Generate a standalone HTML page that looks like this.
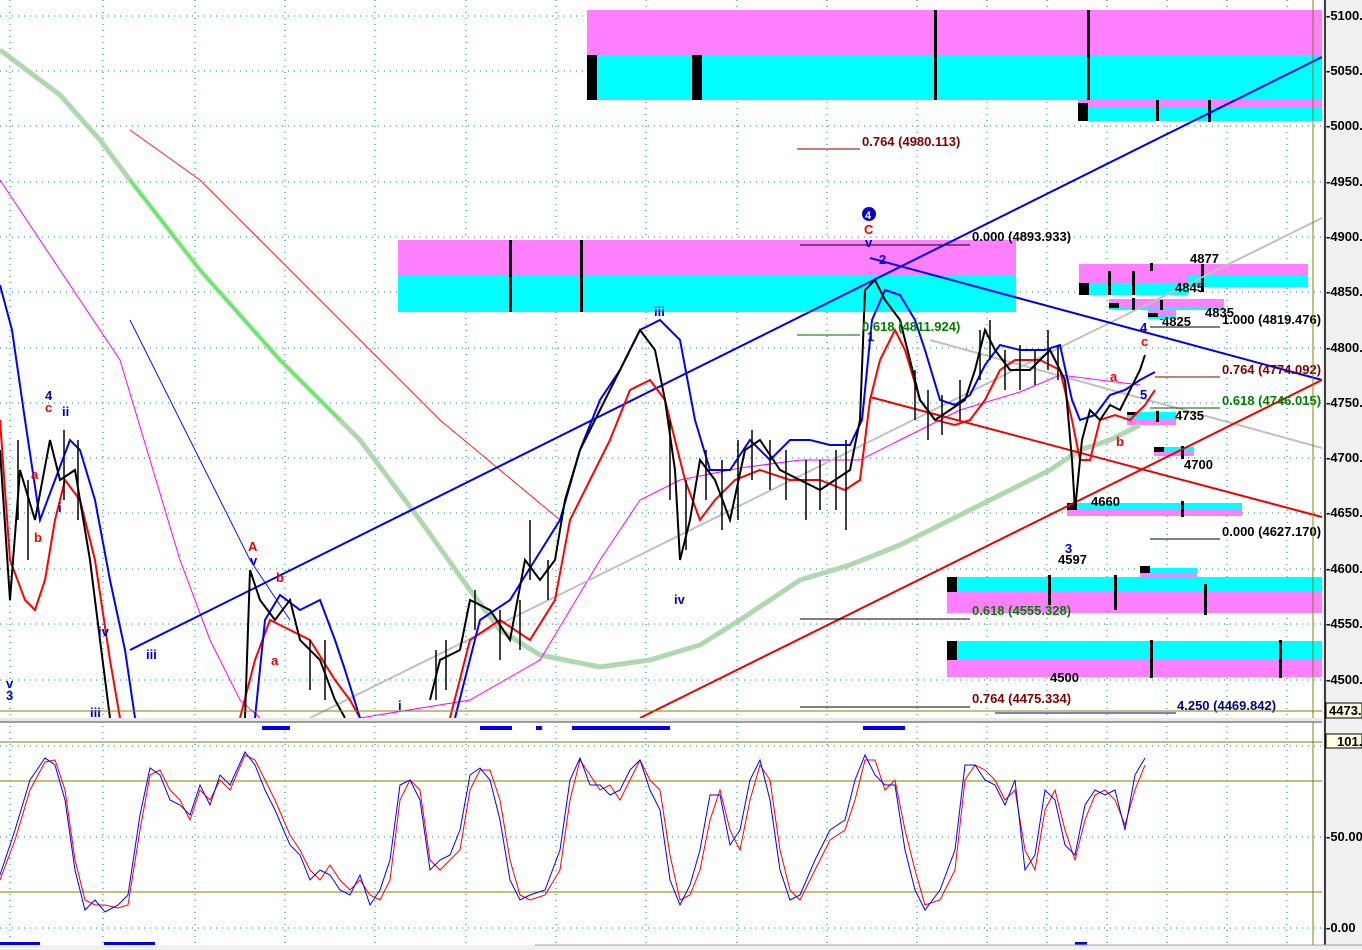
<!DOCTYPE html>
<html><head><meta charset="utf-8"><style>
body{margin:0;background:#fff;}
svg{display:block;font-family:"Liberation Sans",sans-serif;font-weight:bold;font-size:13px}
</style></head><body>
<svg width="1362" height="950" viewBox="0 0 1362 950" xmlns="http://www.w3.org/2000/svg">
<rect width="1362" height="950" fill="#fff"/>
<!-- grid -->
<g stroke="#008080" stroke-width="1" stroke-dasharray="1,5">
<line x1="0" y1="16" x2="1322" y2="16"/><line x1="0" y1="71" x2="1322" y2="71"/><line x1="0" y1="126" x2="1322" y2="126"/><line x1="0" y1="182" x2="1322" y2="182"/><line x1="0" y1="237" x2="1322" y2="237"/><line x1="0" y1="292" x2="1322" y2="292"/><line x1="0" y1="348" x2="1322" y2="348"/><line x1="0" y1="403" x2="1322" y2="403"/><line x1="0" y1="458" x2="1322" y2="458"/><line x1="0" y1="513" x2="1322" y2="513"/><line x1="0" y1="569" x2="1322" y2="569"/><line x1="0" y1="624" x2="1322" y2="624"/><line x1="0" y1="680" x2="1322" y2="680"/>
<line x1="0" y1="746" x2="1322" y2="746"/><line x1="0" y1="837" x2="1322" y2="837"/><line x1="0" y1="928" x2="1322" y2="928"/>
<line x1="10" y1="0" x2="10" y2="945"/><line x1="103" y1="0" x2="103" y2="945"/><line x1="195" y1="0" x2="195" y2="945"/><line x1="285" y1="0" x2="285" y2="945"/><line x1="375" y1="0" x2="375" y2="945"/><line x1="466" y1="0" x2="466" y2="945"/><line x1="556" y1="0" x2="556" y2="945"/><line x1="646" y1="0" x2="646" y2="945"/><line x1="737" y1="0" x2="737" y2="945"/><line x1="827" y1="0" x2="827" y2="945"/><line x1="917" y1="0" x2="917" y2="945"/><line x1="987" y1="0" x2="987" y2="945"/><line x1="1047" y1="0" x2="1047" y2="945"/><line x1="1107" y1="0" x2="1107" y2="945"/><line x1="1167" y1="0" x2="1167" y2="945"/><line x1="1227" y1="0" x2="1227" y2="945"/><line x1="1287" y1="0" x2="1287" y2="945"/>
</g>
<!-- boxes -->
<rect x="587" y="10" width="735" height="45" fill="#ff80ff"/><rect x="587" y="55" width="735" height="45" fill="#00ffff"/>
<rect x="587" y="55" width="10" height="45" fill="#000"/><rect x="692" y="55" width="10" height="45" fill="#000"/>
<rect x="934" y="10" width="3" height="90" fill="#000"/><rect x="1087" y="10" width="3" height="90" fill="#000"/>
<rect x="1078" y="100" width="244" height="8" fill="#ff80ff"/><rect x="1078" y="108" width="244" height="13" fill="#00ffff"/><rect x="1078" y="103" width="10" height="18" fill="#000"/>
<rect x="1156" y="100" width="3" height="21" fill="#000"/><rect x="1208" y="100" width="3" height="22" fill="#000"/>
<rect x="398" y="240" width="618" height="36" fill="#ff80ff"/><rect x="398" y="276" width="618" height="36" fill="#00ffff"/>
<rect x="509" y="240" width="3" height="72" fill="#000"/><rect x="580" y="240" width="3" height="72" fill="#000"/>
<rect x="1079" y="264" width="229" height="20" fill="#ff80ff"/><rect x="1188" y="276" width="120" height="11" fill="#00ffff"/><rect x="1079" y="283" width="109" height="12" fill="#00ffff"/><rect x="1079" y="283" width="10" height="12" fill="#000"/>
<rect x="1108" y="271" width="3" height="24" fill="#000"/><rect x="1132" y="271" width="3" height="24" fill="#000"/><rect x="1150" y="263" width="3" height="8" fill="#000"/><rect x="1201" y="264" width="3" height="28" fill="#000"/>
<rect x="1109" y="299" width="115" height="8" fill="#ff80ff"/><rect x="1109" y="307" width="115" height="3" fill="#00ffff"/><rect x="1109" y="303" width="10" height="5" fill="#000"/><rect x="1132" y="298" width="3" height="12" fill="#000"/><rect x="1160" y="300" width="3" height="20" fill="#000"/>
<rect x="1148" y="310" width="28" height="5" fill="#ff80ff"/><rect x="1148" y="315" width="28" height="4" fill="#00ffff"/><rect x="1148" y="313" width="10" height="4" fill="#000"/>
<rect x="1127" y="412" width="49" height="7" fill="#00ffff"/><rect x="1127" y="419" width="49" height="6" fill="#ff80ff"/><rect x="1127" y="412" width="10" height="3" fill="#000"/><rect x="1156" y="411" width="3" height="11" fill="#000"/>
<rect x="1154" y="447" width="40" height="5" fill="#00ffff"/><rect x="1154" y="452" width="40" height="4" fill="#ff80ff"/><rect x="1154" y="447" width="10" height="5" fill="#000"/><rect x="1181" y="446" width="3" height="13" fill="#000"/>
<rect x="1067" y="503" width="175" height="7" fill="#00ffff"/><rect x="1067" y="510" width="175" height="6" fill="#ff80ff"/><rect x="1067" y="503" width="10" height="7" fill="#000"/><rect x="1181" y="501" width="3" height="16" fill="#000"/>
<rect x="1140" y="568" width="57" height="5" fill="#00ffff"/><rect x="1140" y="566" width="10" height="7" fill="#000"/>
<rect x="947" y="577" width="375" height="15" fill="#00ffff"/><rect x="947" y="592" width="375" height="21" fill="#ff80ff"/><rect x="1140" y="573" width="57" height="4" fill="#ff80ff"/><rect x="947" y="577" width="10" height="15" fill="#000"/>
<rect x="1048" y="575" width="3" height="30" fill="#000"/><rect x="1114" y="575" width="3" height="35" fill="#000"/><rect x="1204" y="584" width="3" height="31" fill="#000"/>
<rect x="947" y="641" width="375" height="19" fill="#00ffff"/><rect x="947" y="660" width="375" height="17" fill="#ff80ff"/><rect x="947" y="641" width="10" height="19" fill="#000"/><rect x="1150" y="640" width="3" height="38" fill="#000"/><rect x="1279" y="640" width="3" height="38" fill="#000"/>
<!-- MA lines -->
<polyline fill="none" stroke="#b0d8b0" stroke-width="5" points="0,50 60,95 100,140 130,180 200,270 280,360 360,440 420,520 470,590 500,630 540,655 600,667 650,660 700,645 740,620 800,580 850,565 900,545 950,520 1000,495 1050,470 1080,450 1110,440 1140,425"/>
<polyline fill="none" stroke="#30ff30" stroke-width="1.5" points="130,180 200,270 280,360 340,420"/>
<polyline fill="none" stroke="#ff2020" stroke-width="1" points="130,130 200,180 280,260 360,340 440,420 500,470 560,520"/>
<polyline fill="none" stroke="#ff00ff" stroke-width="1" points="0,180 40,240 80,300 120,360 150,460 180,560 210,640 240,700 260,718"/>
<polyline fill="none" stroke="#ff00ff" stroke-width="1" points="360,718 470,700 540,660 600,560 640,500 680,480 740,468 800,460 860,460 900,440 960,410 1020,392 1060,375 1100,380 1140,385"/>
<polyline fill="none" stroke="#1010ff" stroke-width="1" points="130,320 170,400 210,480 250,560 290,620"/>
<polyline fill="none" stroke="#c0c0c0" stroke-width="2" points="310,718 1322,218"/>
<polyline fill="none" stroke="#c0c0c0" stroke-width="2" points="930,340 1322,448"/>
<!-- trendlines -->
<line x1="130" y1="650" x2="1322" y2="57" stroke="#0000ee" stroke-width="2"/>
<line x1="870" y1="258" x2="1322" y2="380" stroke="#0000ee" stroke-width="2"/>
<line x1="640" y1="718" x2="1322" y2="380" stroke="#ee0000" stroke-width="2"/>
<line x1="870" y1="397" x2="1322" y2="517" stroke="#ee0000" stroke-width="2"/>
<!-- price -->
<polyline fill="none" stroke="#ff0000" stroke-width="2" points="0,420 10,560 25,600 35,610 45,580 55,520 65,480 80,500 95,560 110,660 120,718"/>
<polyline fill="none" stroke="#0000ff" stroke-width="2" points="0,285 12,330 25,420 40,520 55,480 70,440 80,450 95,500 110,580 125,650 135,718"/>
<polyline fill="none" stroke="#ff0000" stroke-width="2" points="240,718 255,660 270,620 290,630 310,640 335,680 350,700 360,718"/>
<polyline fill="none" stroke="#0000ff" stroke-width="2" points="255,718 265,620 280,595 300,610 320,600 335,640 345,670 360,718"/>
<polyline fill="none" stroke="#ff0000" stroke-width="2" points="450,718 470,640 500,620 530,640 555,600 570,520 590,480 610,440 630,390 650,380 665,400 685,480 700,520 715,500 735,480 760,470 790,480 820,480 845,490 860,480 870,400 880,360 895,330 905,350 920,400 935,420 955,425 970,420 985,400 1000,370 1015,360 1040,360 1060,370 1072,420 1080,460 1090,460 1100,420 1115,415 1130,420 1145,405 1155,390"/>
<polyline fill="none" stroke="#0000ff" stroke-width="2" points="455,718 480,620 510,600 535,560 560,520 580,450 600,400 620,370 640,330 660,320 680,340 695,420 710,470 730,470 750,440 770,460 790,440 810,440 830,445 850,445 862,420 872,320 885,290 900,295 915,320 925,350 940,400 955,405 970,395 985,365 1000,345 1020,350 1045,350 1060,345 1072,400 1080,420 1095,415 1110,395 1125,390 1140,380 1155,372"/>
<g stroke="#000" stroke-width="2" fill="none">
<polyline points="0,450 10,600 20,470 35,520 50,440 60,480 75,470 90,560 100,640 110,718"/>
<polyline points="245,718 250,570 260,600 275,620 290,600 300,640 320,660 335,700 345,718"/>
<polyline points="430,700 440,660 460,650 470,600 490,610 510,640 525,560 540,580 555,560 565,500 580,450 595,420 610,390 625,360 640,330 655,350 665,400 675,470 680,560 690,520 700,460 715,480 730,520 745,450 760,440 780,470 800,480 820,490 835,480 850,470 860,420 865,290 875,280 885,300 900,320 910,360 920,400 935,420 950,410 965,400 975,370 985,330 995,350 1010,370 1030,370 1050,350 1065,380 1072,460 1075,510 1082,440 1090,410 1100,420 1110,405 1120,410 1130,390 1140,370 1145,355"/>
</g>
<g stroke="#000" stroke-width="1.5">
<line x1="436" y1="650" x2="436" y2="700"/><line x1="446" y1="640" x2="446" y2="690"/><line x1="475" y1="590" x2="475" y2="630"/><line x1="500" y1="610" x2="500" y2="660"/><line x1="520" y1="600" x2="520" y2="650"/><line x1="530" y1="520" x2="530" y2="580"/><line x1="548" y1="560" x2="548" y2="600"/>
<line x1="670" y1="420" x2="670" y2="500"/><line x1="686" y1="480" x2="686" y2="550"/><line x1="706" y1="450" x2="706" y2="500"/><line x1="722" y1="460" x2="722" y2="530"/><line x1="738" y1="440" x2="738" y2="520"/><line x1="752" y1="430" x2="752" y2="480"/><line x1="770" y1="440" x2="770" y2="490"/><line x1="786" y1="450" x2="786" y2="500"/><line x1="806" y1="460" x2="806" y2="520"/><line x1="820" y1="460" x2="820" y2="510"/><line x1="836" y1="450" x2="836" y2="510"/><line x1="846" y1="440" x2="846" y2="530"/>
<line x1="915" y1="370" x2="915" y2="420"/><line x1="928" y1="390" x2="928" y2="440"/><line x1="942" y1="395" x2="942" y2="435"/><line x1="960" y1="380" x2="960" y2="420"/><line x1="980" y1="330" x2="980" y2="380"/><line x1="990" y1="320" x2="990" y2="360"/><line x1="1005" y1="350" x2="1005" y2="390"/><line x1="1020" y1="345" x2="1020" y2="390"/><line x1="1035" y1="350" x2="1035" y2="385"/><line x1="1048" y1="330" x2="1048" y2="370"/><line x1="1058" y1="345" x2="1058" y2="380"/>
<line x1="18" y1="440" x2="18" y2="520"/><line x1="28" y1="480" x2="28" y2="560"/><line x1="64" y1="430" x2="64" y2="500"/><line x1="78" y1="440" x2="78" y2="520"/><line x1="310" y1="640" x2="310" y2="690"/><line x1="325" y1="640" x2="325" y2="700"/>
</g>
<!-- fib lines -->
<g stroke-width="1">
<line x1="797" y1="149" x2="860" y2="149" stroke="#800000"/>
<line x1="800" y1="245" x2="970" y2="245" stroke="#000"/>
<line x1="797" y1="335" x2="860" y2="335" stroke="#006000"/>
<line x1="1150" y1="327" x2="1220" y2="327" stroke="#000"/>
<line x1="1155" y1="377" x2="1220" y2="377" stroke="#800000"/>
<line x1="1150" y1="408" x2="1220" y2="408" stroke="#006000"/>
<line x1="1150" y1="539" x2="1220" y2="539" stroke="#000"/>
<line x1="800" y1="619" x2="970" y2="619" stroke="#000"/>
<line x1="800" y1="707" x2="970" y2="707" stroke="#000"/>
<line x1="995" y1="713" x2="1176" y2="713" stroke="#000080"/>
</g>
<!-- labels -->
<g font-size="13">
<text x="862" y="146" fill="#800000">0.764 (4980.113)</text>
<text x="972" y="241" fill="#000">0.000 (4893.933)</text>
<text x="862" y="331" fill="#008000">0.618 (4811.924)</text>
<text x="1222" y="324" fill="#000">1.000 (4819.476)</text>
<text x="1222" y="374" fill="#800000">0.764 (4774.092)</text>
<text x="1222" y="405" fill="#008000">0.618 (4746.015)</text>
<text x="1222" y="536" fill="#000">0.000 (4627.170)</text>
<text x="972" y="615" fill="#008000">0.618 (4555.328)</text>
<text x="972" y="703" fill="#800000">0.764 (4475.334)</text>
<text x="1177" y="710" fill="#000080">4.250 (4469.842)</text>
<text x="1190" y="263">4877</text><text x="1175" y="292">4845</text><text x="1205" y="317">4835</text><text x="1162" y="326">4825</text>
<text x="1175" y="420">4735</text><text x="1184" y="469">4700</text><text x="1091" y="506">4660</text><text x="1058" y="564">4597</text><text x="1050" y="682">4500</text>
</g>
<g font-size="13">
<circle cx="869" cy="214" r="7" fill="#0000cc"/><text x="865" y="219" fill="#fff" font-size="11">4</text>
<text x="864" y="234" fill="#e00">C</text><text x="865" y="247" fill="#00c">v</text><text x="879" y="264" fill="#00c">2</text><text x="867" y="341" fill="#00c">1</text>
<text x="654" y="316" fill="#00c">iii</text><text x="674" y="604" fill="#00c">iv</text><text x="1065" y="553" fill="#00c">3</text>
<text x="1140" y="332" fill="#00c">4</text><text x="1141" y="346" fill="#e00">c</text><text x="1110" y="381" fill="#e00">a</text><text x="1140" y="399" fill="#00c">5</text><text x="1116" y="446" fill="#e00">b</text>
<text x="45" y="400" fill="#00c">4</text><text x="45" y="412" fill="#e00">c</text><text x="62" y="416" fill="#00c">ii</text><text x="31" y="479" fill="#e00">a</text><text x="34" y="542" fill="#e00">b</text><text x="58" y="512" fill="#00c">i</text><text x="98" y="636" fill="#00c">iv</text><text x="90" y="717" fill="#00c">iii</text><text x="6" y="688" fill="#00c">v</text><text x="6" y="700" fill="#00c">3</text><text x="146" y="659" fill="#00c">iii</text>
<text x="248" y="551" fill="#e00">A</text><text x="250" y="565" fill="#00c">v</text><text x="276" y="582" fill="#e00">b</text><text x="271" y="665" fill="#e00">a</text><text x="398" y="710" fill="#00c">i</text>
</g>
<!-- olive lines -->
<g stroke="#808000" stroke-width="1">
<line x1="0" y1="711" x2="1322" y2="711"/><line x1="0" y1="742" x2="1322" y2="742"/><line x1="0" y1="781" x2="1322" y2="781"/><line x1="0" y1="892" x2="1322" y2="892"/><line x1="1313" y1="0" x2="1313" y2="945"/>
</g>
<!-- separator -->
<rect x="0" y="718" width="1362" height="4" fill="#e8e8e8"/><line x1="0" y1="722" x2="1362" y2="722" stroke="#808080" stroke-width="1.5"/>
<!-- bars -->
<g fill="#0000ee">
<rect x="262" y="726" width="28" height="4"/><rect x="480" y="726" width="32" height="4"/><rect x="536" y="726" width="6" height="4"/><rect x="572" y="726" width="98" height="4"/><rect x="863" y="726" width="42" height="4"/>
<rect x="0" y="942" width="40" height="4"/><rect x="104" y="942" width="51" height="4"/><rect x="1075" y="942" width="12" height="4"/>
</g>
<!-- stochastic -->
<polyline fill="none" stroke="#ff0000" stroke-width="1" points="0,880 15,840 30,790 45,762 55,760 65,790 75,860 85,900 95,905 105,905 118,908 128,905 140,830 150,775 160,770 170,790 180,800 190,820 200,790 210,800 220,780 230,790 245,755 255,760 265,780 275,800 290,835 300,850 310,870 320,880 330,865 340,880 350,890 360,880 370,895 380,900 390,880 400,800 410,780 420,790 430,860 440,870 450,860 460,850 470,790 480,770 490,770 500,800 510,860 520,895 530,900 545,895 560,870 570,800 580,760 590,775 600,790 610,785 620,800 630,780 640,760 650,780 660,790 670,855 680,900 690,895 700,870 710,820 720,790 730,830 740,850 750,800 760,765 770,780 780,850 790,890 800,900 815,870 830,840 845,830 855,800 865,760 875,760 885,790 895,780 905,830 915,870 925,905 940,900 955,870 965,780 975,765 985,770 995,780 1005,800 1015,790 1025,850 1035,870 1045,810 1055,790 1065,830 1075,860 1085,820 1095,795 1105,790 1115,800 1125,825 1135,790 1145,765"/>
<polyline fill="none" stroke="#0000ff" stroke-width="1" points="0,875 15,830 30,780 45,758 55,765 65,800 75,870 85,910 95,900 105,912 118,905 128,895 140,815 150,768 160,775 170,800 180,805 190,815 200,785 210,805 220,775 230,785 245,752 255,765 265,790 275,810 290,845 300,855 310,880 320,870 330,875 340,890 350,895 360,875 370,905 380,890 390,860 400,785 410,780 420,800 430,870 440,860 450,855 460,830 470,775 480,768 490,780 500,820 510,880 520,900 530,895 545,890 560,850 570,780 580,758 590,785 600,785 610,795 620,790 630,770 640,760 650,790 660,810 670,880 680,905 690,885 700,850 710,795 720,795 730,845 740,830 750,780 760,760 770,800 780,870 790,900 800,895 815,860 830,830 845,820 855,780 865,755 875,775 885,785 895,785 905,850 915,890 925,910 940,890 955,850 965,765 975,765 985,780 995,785 1005,805 1015,780 1025,870 1035,855 1045,790 1055,800 1065,845 1075,855 1085,805 1095,790 1105,795 1115,790 1125,830 1135,775 1145,758"/>
<!-- right axis -->
<rect x="1322" y="0" width="40" height="950" fill="#f0f0f0"/>
<line x1="1325" y1="0" x2="1325" y2="945" stroke="#000" stroke-width="1.5"/>
<rect x="0" y="945" width="1362" height="5" fill="#f0f0f0"/><line x1="535" y1="945" x2="1362" y2="945" stroke="#a0a0a0"/>
<g font-size="13" fill="#000">
<text x="1326" y="20">-5100.</text><text x="1326" y="75">-5050.</text><text x="1326" y="130">-5000.</text><text x="1326" y="186">-4950.</text><text x="1326" y="241">-4900.</text><text x="1326" y="296">-4850.</text><text x="1326" y="352">-4800.</text><text x="1326" y="407">-4750.</text><text x="1326" y="462">-4700.</text><text x="1326" y="517">-4650.</text><text x="1326" y="573">-4600.</text><text x="1326" y="628">-4550.</text><text x="1326" y="684">-4500.</text>
<text x="1326" y="841">-50.00</text><text x="1326" y="932">-0.00</text>
</g>
<rect x="1326" y="703" width="36" height="15" fill="#ffffe0" stroke="#000"/><text x="1329" y="715" font-size="13">4473.</text>
<rect x="1326" y="734" width="36" height="14" fill="#ffffe0" stroke="#000"/><text x="1337" y="746" font-size="13">101.</text>
</svg>
</body></html>
